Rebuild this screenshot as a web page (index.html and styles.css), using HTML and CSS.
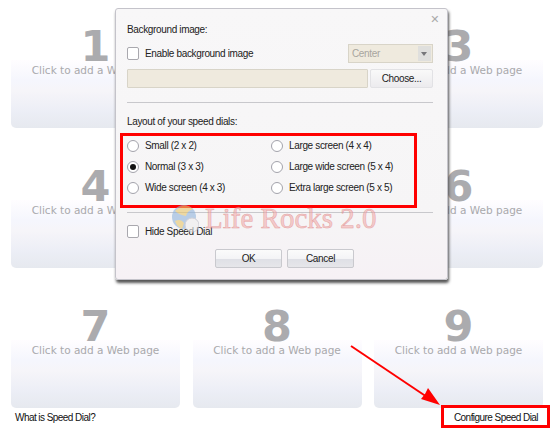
FILE: index.html
```html
<!DOCTYPE html>
<html lang="en">
<head>
    <meta charset="UTF-8">
    <title>Configure Speed Dial</title>
    <link rel="stylesheet" href="styles.css">
</head>
<body>
    <div class="dials">
        <div class="dial"><div class="num">1</div><div class="card">Click to add a Web page</div></div>
        <div class="dial"><div class="num">2</div><div class="card">Click to add a Web page</div></div>
        <div class="dial"><div class="num">3</div><div class="card">Click to add a Web page</div></div>
        <div class="dial"><div class="num">4</div><div class="card">Click to add a Web page</div></div>
        <div class="dial"><div class="num">5</div><div class="card">Click to add a Web page</div></div>
        <div class="dial"><div class="num">6</div><div class="card">Click to add a Web page</div></div>
        <div class="dial"><div class="num">7</div><div class="card">Click to add a Web page</div></div>
        <div class="dial"><div class="num">8</div><div class="card">Click to add a Web page</div></div>
        <div class="dial"><div class="num">9</div><div class="card">Click to add a Web page</div></div>
    </div>

    <div class="footer">
        <span>What is Speed Dial?</span>
        <span>Configure Speed Dial</span>
    </div>

    <div class="dialog">
        <div class="close">&#10005;</div>
        <div class="title">Background image:</div>
        <div class="bg-row">
            <label class="check"><span class="box"></span>Enable background image</label>
            <div class="select">
                <span>Center</span>
                <span class="select-btn"></span>
            </div>
        </div>
        <div class="file-row">
            <div class="file-input"></div>
            <div class="btn choose">Choose...</div>
        </div>
        <div class="sep"></div>
        <div class="title layout-title">Layout of your speed dials:</div>
        <div class="layouts">
            <label class="radio"><span class="dot"></span>Small (2 x 2)</label>
            <label class="radio"><span class="dot"></span>Large screen (4 x 4)</label>
            <label class="radio"><span class="dot on"></span>Normal (3 x 3)</label>
            <label class="radio"><span class="dot"></span>Large wide screen (5 x 4)</label>
            <label class="radio"><span class="dot"></span>Wide screen (4 x 3)</label>
            <label class="radio"><span class="dot"></span>Extra large screen (5 x 5)</label>
        </div>
        <div class="sep sep2"></div>
        <label class="check hide"><span class="box"></span>Hide Speed Dial</label>
        <div class="actions">
            <div class="btn action">OK</div>
            <div class="btn action">Cancel</div>
        </div>
    </div>

    <!-- annotations on top of the screenshot -->
    <div class="mark mark-layout"></div>
    <div class="mark mark-config"></div>
    <svg class="arrow" width="100" height="70" viewBox="0 0 100 70">
        <line x1="1" y1="1" x2="80" y2="54" stroke="#f00" stroke-width="2"/>
        <path d="M90 60 L71 54 L75 49 L78 43 Z" fill="#f00"/>
    </svg>

    <div class="watermark">
        <svg width="28" height="30" viewBox="0 0 28 30">
            <circle cx="13" cy="14" r="12" fill="#8fb4dc"/>
            <path d="M4 8 Q13 -2 22 6 Q16 8 15 13 Q8 12 4 8 Z" fill="#e8c66a"/>
            <path d="M4 18 Q10 15 13 20 L11 26 Q6 24 4 18 Z" fill="#e8c66a"/>
            <circle cx="21" cy="22" r="7" fill="#eeeeee" stroke="#b9b9c4"/>
        </svg>
        <span>Life Rocks 2.0</span>
    </div>
</body>
</html>
```

FILE: styles.css
```css
* {
    margin: 0;
    padding: 0;
    box-sizing: border-box;
}

body {
    width: 550px;
    height: 431px;
    overflow: hidden;
    background: #fff;
    position: relative;
    font-family: "Liberation Sans", sans-serif;
    font-size: 10px;
    letter-spacing: -0.35px;
    color: #222;
}

.dials {
    display: grid;
    grid-template-columns: repeat(3, 169px);
    grid-auto-rows: 103px;
    column-gap: 12.5px;
    row-gap: 37px;
    padding: 25px 0 0 11px;
}

.num {
    height: 35px;
    text-align: center;
    font-family: "DejaVu Sans", sans-serif;
    font-weight: bold;
    font-size: 43px;
    line-height: 42px;
    letter-spacing: 0;
    color: #ababae;
}

.card {
    height: 68px;
    padding-top: 4px;
    text-align: center;
    font-family: "DejaVu Sans", sans-serif;
    font-size: 10.5px;
    line-height: 13px;
    letter-spacing: 0;
    color: #a9a9ac;
    border-radius: 0 0 5px 5px;
    background: linear-gradient(#fffdff 0%, #f5f6fd 30%, #f6f5f9 45%, #eceef6 75%, #e6e9ef 100%);
}

.footer {
    display: flex;
    justify-content: space-between;
    padding: 3px 12px 0 15px;
    line-height: 14px;
    letter-spacing: -0.55px;
    color: #111;
}

.dialog {
    position: absolute;
    left: 115px;
    top: 8px;
    width: 333px;
    height: 272px;
    padding: 13px 14px 0 11px;
    background: linear-gradient(#f8f7f8 0%, #f6f5f6 75%, #f6f1f5 100%);
    border: 1px solid #c4c3ca;
    border-radius: 3px;
    box-shadow: 1px 3px 3px #555;
}

.close {
    position: absolute;
    right: 8px;
    top: 4px;
    font-family: "DejaVu Sans", sans-serif;
    font-size: 11px;
    line-height: 14px;
    color: #aaa;
}

.title {
    line-height: 15px;
}

.bg-row {
    display: flex;
    justify-content: space-between;
    align-items: center;
    height: 20px;
    margin-top: 6px;
}

.check {
    display: flex;
    align-items: center;
    gap: 6px;
}

.box {
    width: 12px;
    height: 13px;
    background: #fff;
    border: 1px solid #a9a8ae;
    border-radius: 2px;
}

.select {
    display: flex;
    justify-content: space-between;
    align-items: center;
    width: 85px;
    height: 19px;
    padding: 0 1px 0 3px;
    background: #efeade;
    border: 1px solid #d8d4c8;
    color: #a8a69e;
}

.select-btn {
    position: relative;
    width: 13px;
    height: 15px;
    background: #dfdfdd;
}

.select-btn::after {
    content: "";
    position: absolute;
    left: 3px;
    top: 6px;
    border: 3.5px solid transparent;
    border-top: 4px solid #77777a;
    border-bottom: 0;
}

.file-row {
    display: flex;
    justify-content: space-between;
    margin-top: 6px;
}

.file-input {
    width: 241px;
    height: 19px;
    background: #efeade;
    border: 1px solid #d8d4c8;
    border-radius: 1px;
}

.btn {
    height: 19px;
    line-height: 17px;
    text-align: center;
    background: linear-gradient(#fbfbfb 0%, #f4f4f6 50%, #dfe0e6 55%, #e6e6ea 100%);
    border: 1px solid #c9c9ce;
    border-radius: 2px;
}

.choose {
    width: 63px;
    background: linear-gradient(#f9f9f9, #ecebee);
    border-color: #e2e2e5;
}

.sep {
    height: 1px;
    margin-top: 14px;
    background: #c8c8cc;
}

.layout-title {
    margin-top: 11px;
}

.layouts {
    display: grid;
    grid-template-columns: 144px 1fr;
    grid-auto-rows: 21px;
    margin-top: 6px;
}

.radio {
    display: flex;
    align-items: center;
    gap: 6px;
}

.dot {
    position: relative;
    width: 12px;
    height: 12px;
    background: #fff;
    border: 1px solid #a3a3ab;
    border-radius: 50%;
}

.dot.on::after {
    content: "";
    position: absolute;
    left: 2px;
    top: 2px;
    width: 6px;
    height: 6px;
    background: #111;
    border-radius: 50%;
}

.sep2 {
    margin-top: 14px;
}

.hide {
    margin-top: 12px;
}

.actions {
    display: flex;
    justify-content: flex-end;
    gap: 5px;
    margin-top: 11px;
    padding-right: 79px;
}

.action {
    width: 67px;
}

.mark {
    position: absolute;
    border: 3px solid #f00;
}

.mark-layout {
    left: 120px;
    top: 133px;
    width: 297px;
    height: 75px;
}

.mark-config {
    left: 441px;
    top: 405px;
    width: 109px;
    height: 23px;
}

.arrow {
    position: absolute;
    left: 350px;
    top: 345px;
}

.watermark {
    position: absolute;
    left: 171px;
    top: 203px;
    display: flex;
    align-items: center;
    gap: 6px;
    opacity: 0.6;
}

.watermark span {
    font-family: "Liberation Serif", serif;
    font-size: 29px;
    line-height: 28px;
    letter-spacing: 0;
    color: #f3b0b0;
    -webkit-text-stroke: 0.5px #d96a6a;
}
```
